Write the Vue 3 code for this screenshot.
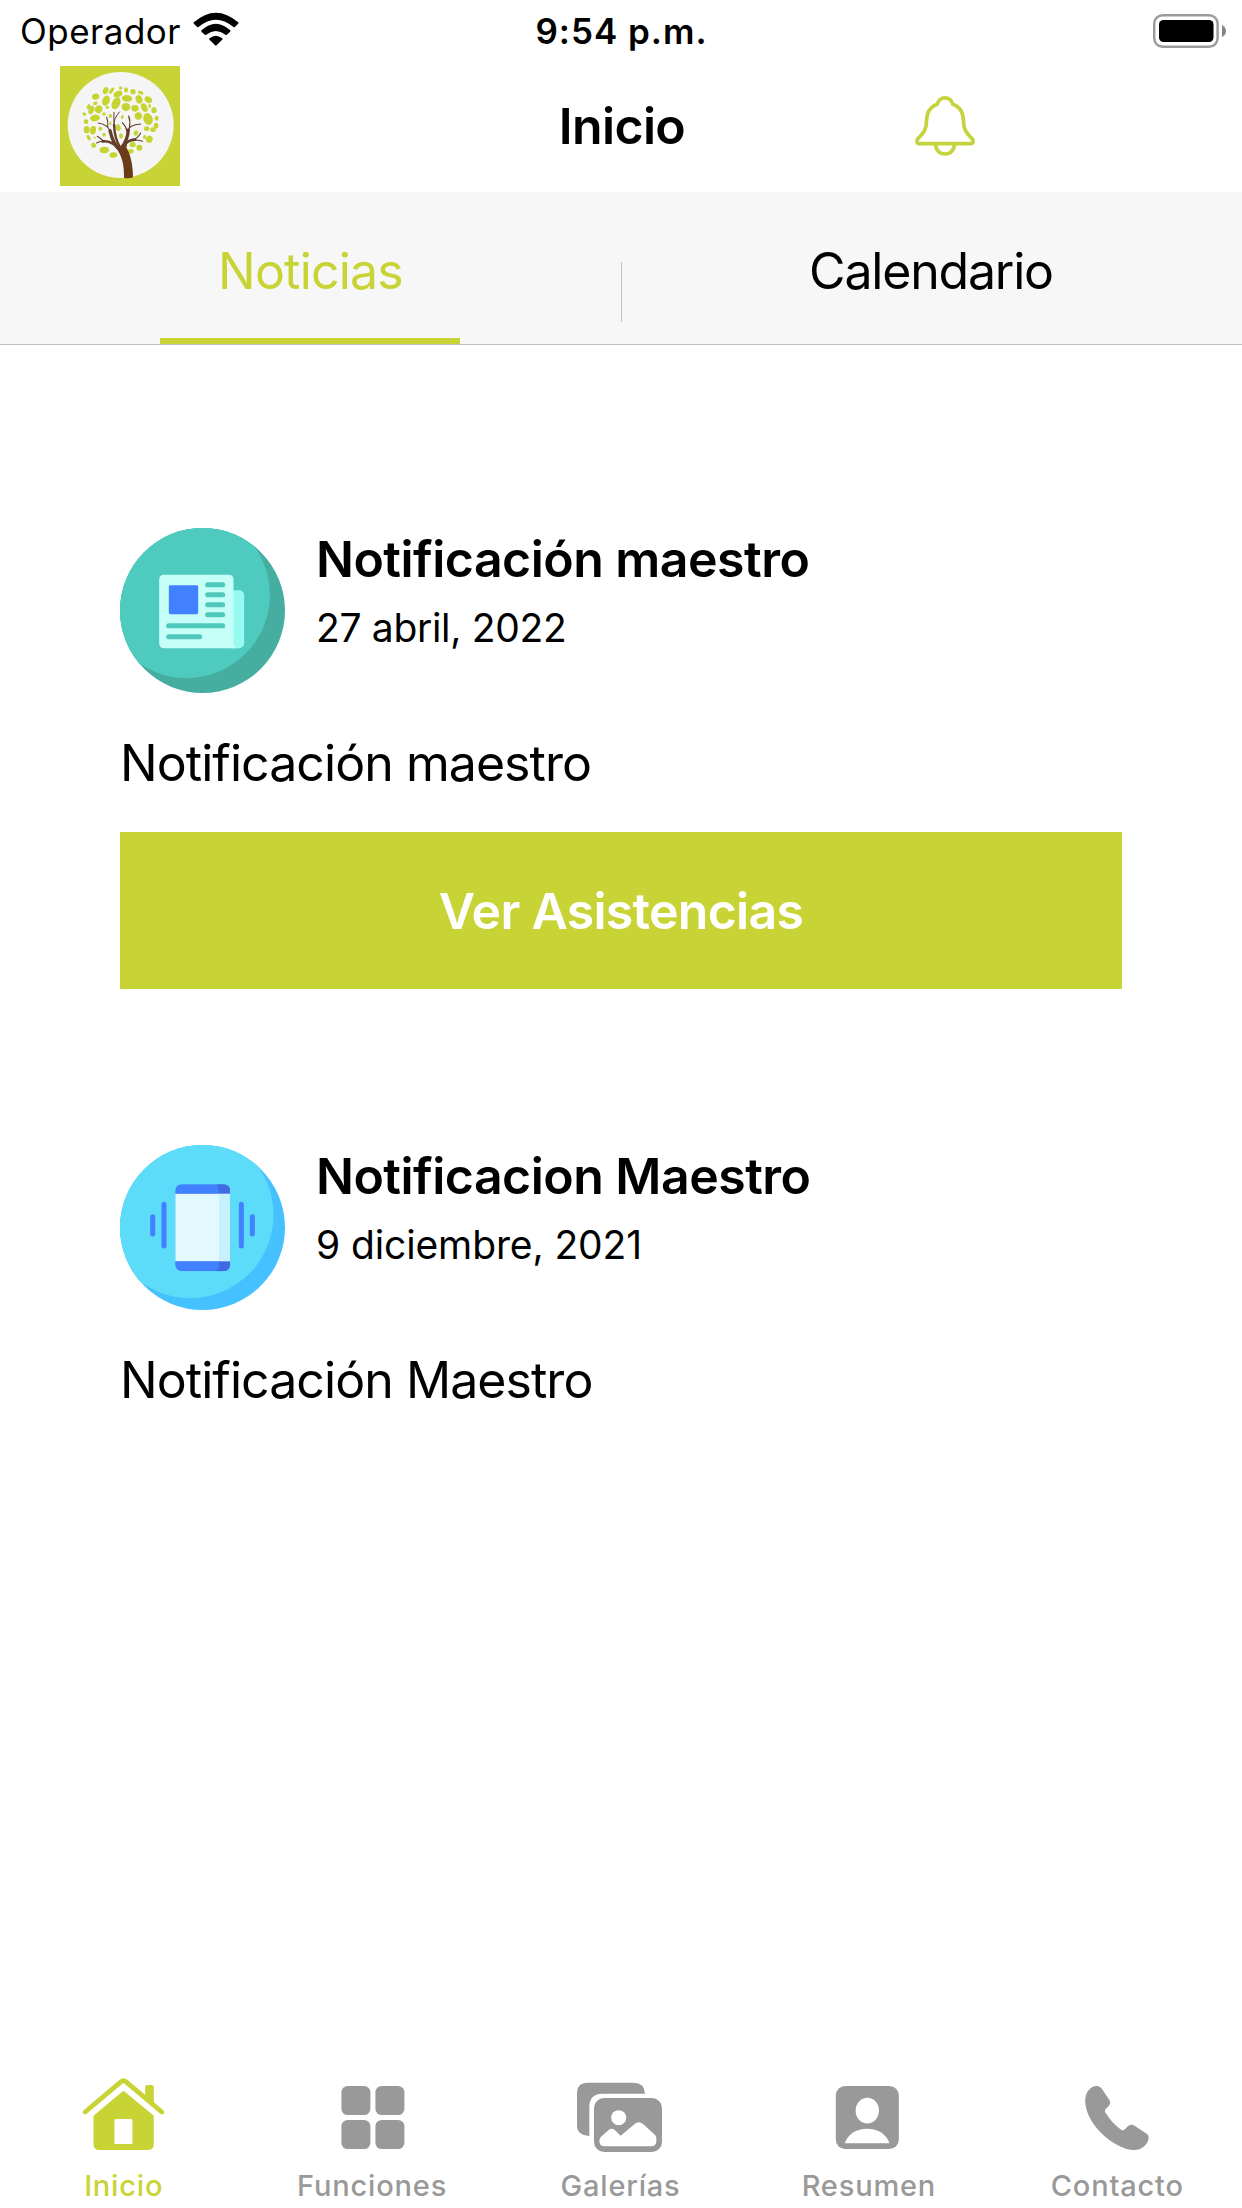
<script setup>
import { ref } from 'vue'

// Canopy leaves: [cx, cy, rx, ry, rotation]
const leaves = [
  [137, 110, 11, 9, -15], [167, 92, 8, 11, 25], [185, 92, 5, 11, 35], [212, 84, 5, 5, 0],
  [228, 90, 6, 8, 0], [249, 95, 8, 8, 0], [272, 98, 9, 5, 20], [204, 102, 14, 9, -25],
  [168, 122, 11, 16, 20], [198, 130, 12, 19, 25], [231, 115, 16, 10, 5], [267, 118, 10, 13, -20],
  [295, 119, 12, 9, 30], [116, 140, 5, 8, 25], [136, 130, 7, 5, -15], [124, 150, 8, 13, 25],
  [146, 148, 11, 12, 20], [172, 142, 5, 5, 0], [228, 141, 13, 12, 0], [255, 145, 11, 10, 0],
  [283, 143, 9, 14, -25], [312, 151, 8, 9, 0], [299, 138, 4, 6, 0], [103, 162, 6, 5, 20],
  [135, 174, 15, 10, -8], [162, 162, 5, 5, 0], [181, 168, 5, 6, 0], [265, 168, 11, 11, 0],
  [294, 177, 14, 18, -20], [320, 175, 6, 8, 0], [108, 185, 7, 7, 0], [110, 209, 9, 11, 0],
  [129, 211, 9, 13, 10], [151, 206, 6, 6, 0], [204, 203, 8, 10, -15], [217, 171, 4, 6, 20],
  [318, 197, 7, 9, 0], [290, 206, 8, 7, 0], [309, 209, 8, 7, 0], [258, 219, 7, 8, 20],
  [298, 238, 10, 11, 20], [284, 231, 5, 6, 0], [116, 233, 5, 9, -28], [134, 233, 3, 3, 0],
  [131, 256, 7, 8, -20], [162, 224, 5, 6, 0], [213, 228, 6, 8, 0], [248, 254, 9, 8, 0],
  [268, 263, 9, 9, 0], [242, 274, 9, 7, -15], [163, 270, 14, 10, 0], [190, 285, 12, 8, -5],
  [206, 253, 4, 5, 0], [181, 190, 3, 6, 20]
]

const posts = [
  { id: 1, icon: 'news', title: 'Notificación maestro', date: '27 abril, 2022', body: 'Notificación maestro', action: 'Ver Asistencias' },
  { id: 2, icon: 'phone', title: 'Notificacion Maestro', date: '9 diciembre, 2021', body: 'Notificación Maestro' }
]

const tabs = ['Noticias', 'Calendario']
const activeTab = ref('Noticias')

const nav = [
  { id: 'home', label: 'Inicio', box: '66.6 48 252 228' },
  { id: 'grid', label: 'Funciones', box: '811.8 48 252 228' },
  { id: 'gallery', label: 'Galerías', box: '117 48 252 228' },
  { id: 'profile', label: 'Resumen', box: '861.6 48 252 228' },
  { id: 'call', label: 'Contacto', box: '167.4 48 252 228' }
]
const activeNav = ref('home')
</script>

<template>
  <div class="screen">
    <div class="status">
      <div class="carrier">
        <span class="carrier-name">Operador</span>
        <svg class="wifi" viewBox="580 37 137 102">
          <path d="M582 68 Q648 10 715 68 Q717 70 715 72 L705 82 Q703 84 701 82 Q648 38 596 82 Q594 84 592 82 L582 72 Q580 70 582 68Z" />
          <path d="M605 92 Q648 53 691 92 Q693 94 691 96 L681 105 Q679 107 677 105 Q648 83 619 105 Q617 107 615 105 L605 96 Q603 94 605 92Z" />
          <path d="M629 116 Q648 100 667 116 Q669 118 667 120 L650 137 Q648 139 646 137 L629 120 Q627 118 629 116Z" />
        </svg>
      </div>
      <span class="time">9:54 p.m.</span>
      <div class="power">
        <svg class="battery" viewBox="0 0 73 34">
          <rect x="1.2" y="1.2" width="63.400" height="31.6" rx="8.5" fill="none" stroke="#9b9b9b" stroke-width="2.4" />
          <rect x="6" y="6" width="54.500" height="22" rx="4.5" fill="#000" />
          <path d="M69 11 Q73 13 73 17 T69 23Z" fill="#858585" />
        </svg>
      </div>
    </div>

    <header class="header">
      <svg class="logo" viewBox="30 18 360 360">
        <rect x="30" y="18" width="360" height="360" fill="#c8d435" />
        <circle cx="212" cy="195" r="159" fill="#f5f5f6" />
        <ellipse
          v-for="(l, i) in leaves"
          :key="i"
          :cx="l[0]" :cy="l[1]" :rx="l[2]" :ry="l[3]"
          :transform="`rotate(${l[4]} ${l[0]} ${l[1]})`"
          fill="#c5d431"
        />
        <path d="M222 353 C223 315 216 286 196 262 C190 254 193 247 200 254 Q211 266 222 254 C229 245 234 252 229 262 C243 286 249 320 249 352 Q235 357 222 353Z" fill="#6b3a17" />
        <g fill="none" stroke="#643d2a" stroke-linecap="round">
          <path d="M205 264 C188 250 184 226 180 212" stroke-width="10" />
          <path d="M180 214 C176 200 164 192 145 189 M173 200 Q175 184 170 172" stroke-width="3.4" />
          <path d="M202 262 C188 246 172 243 158 244" stroke-width="8" />
          <path d="M160 244 Q150 243 140 249 M160 243 Q148 232 142 229" stroke-width="3.4" />
          <path d="M210 262 C196 240 193 216 192 194" stroke-width="7" />
          <path d="M192 196 Q190 176 208 156 M192 188 Q191 170 192 157" stroke-width="3" />
          <path d="M214 264 C228 246 234 228 235 210" stroke-width="10" />
          <path d="M235 212 C236 200 246 194 272 192 M238 203 Q242 184 236 168 M232 217 Q229 200 217 188" stroke-width="3.4" />
          <path d="M219 262 C230 242 242 240 256 239" stroke-width="8" />
          <path d="M250 240 Q266 240 277 244 M250 239 Q266 232 272 219" stroke-width="3.4" />
        </g>
      </svg>
      <h1 class="title">Inicio</h1>
      <svg class="bell" viewBox="0 0 60 60" fill="none" stroke="#c5d33f" stroke-width="3.7" stroke-linejoin="round">
        <path d="M4 47.6 C1.6 47.6 1.4 45 2.8 42.8 C6.5 38.5 10.6 36 11.2 29 C11.8 22 11 12.500 22.2 8.2 C23.5 4 26 1.9 30 1.9 S36.5 4 37.8 8.2 C49 12.500 48.2 22 48.8 29 C49.4 36 53.5 38.5 57.2 42.8 C58.6 45 58.4 47.6 56 47.6Z" />
        <path d="M20.6 48 C20.6 54 24.5 58 30 58 S39.4 54 39.4 48" />
      </svg>
    </header>

    <div class="tabs">
      <button
        v-for="t in tabs"
        :key="t"
        class="tab"
        :class="{ active: t === activeTab, wide: t === 'Calendario' }"
        @click="activeTab = t"
      >
        {{ t }}
      </button>
      <span class="divider"></span>
    </div>

    <main class="feed">
      <article v-for="p in posts" :key="p.id" class="post">
        <div class="post-head">
          <svg v-if="p.icon === 'news'" class="badge" viewBox="29.5 53.5 495 495">
            <defs><clipPath id="newsDisc"><circle cx="277" cy="301" r="247.5" /></clipPath></defs>
            <g clip-path="url(#newsDisc)">
              <rect x="29" y="53" width="496" height="496" fill="#46aea0" />
              <circle cx="229" cy="254" r="250" fill="#4fcabf" />
              <path d="M29 53 H437 L437 113 L95 465 L29 465Z" fill="#4fcabf" />
            </g>
            <rect x="345" y="240" width="57" height="174" rx="15" fill="#97faf0" />
            <path d="M162 194 H355 Q370 194 370 209 V399 Q370 414 387 414 H162 Q147 414 147 399 V209 Q147 194 162 194Z" fill="#c6fff8" />
            <rect x="176" y="225" width="88" height="87" rx="4" fill="#4180ff" />
            <g fill="#50c7bb">
              <rect x="285" y="216" width="60" height="15" rx="7.5" />
              <rect x="285" y="246" width="60" height="15" rx="7.5" />
              <rect x="285" y="276" width="60" height="15" rx="7.5" />
              <rect x="285" y="306" width="60" height="15" rx="7.5" />
              <rect x="168" y="339" width="177" height="15" rx="7.5" />
              <rect x="168" y="372" width="108" height="15" rx="7.5" />
            </g>
          </svg>
          <svg v-else class="badge" viewBox="29.5 44.5 495 495">
            <defs>
              <clipPath id="phoneDisc"><circle cx="277" cy="292" r="247.5" /></clipPath>
              <clipPath id="phoneBody"><rect x="195" y="162" width="165" height="261" rx="20" /></clipPath>
            </defs>
            <g clip-path="url(#phoneDisc)">
              <rect x="29" y="44" width="496" height="496" fill="#45c1ff" />
              <circle cx="240" cy="254" r="250" fill="#5ddcfa" />
              <path d="M29 44 H447 L447 110 L100 460 L29 460Z" fill="#5ddcfa" />
            </g>
            <g clip-path="url(#phoneBody)">
              <rect x="195" y="162" width="165" height="261" fill="#4180ff" />
              <path d="M318 162 H360 V423 H318 Q327 415 327 393 V192 Q327 172 318 162Z" fill="#4169e0" />
              <rect x="195" y="191" width="165" height="202" fill="#e2f9ff" />
              <rect x="327" y="191" width="33" height="202" fill="#c7f1ff" />
            </g>
            <g fill="#4180ff">
              <rect x="120" y="252" width="15" height="67" rx="7.5" />
              <rect x="154" y="215" width="15" height="140" rx="7.5" />
              <rect x="386" y="215" width="15" height="140" rx="7.5" />
              <rect x="419" y="252" width="15" height="67" rx="7.5" />
            </g>
          </svg>
          <div class="meta">
            <h2 class="post-title">{{ p.title }}</h2>
            <span class="date" :class="p.icon">{{ p.date }}</span>
          </div>
        </div>
        <p class="body">{{ p.body }}</p>
        <button v-if="p.action" class="action">{{ p.action }}</button>
      </article>
    </main>

    <nav class="nav">
      <a
        v-for="n in nav"
        :key="n.id"
        class="nav-item"
        :class="{ active: n.id === activeNav }"
        @click="activeNav = n.id"
      >
        <svg class="nav-icon" :viewBox="n.box" fill="currentColor">
          <template v-if="n.id === 'home'">
            <path d="M256 112 V82 Q256 75 263 75 H275 Q282 75 282 82 V135Z" />
            <path d="M76 156 L184 65 Q191 59 198 65 L306 156" fill="none" stroke="currentColor" stroke-width="14.5" stroke-linecap="round" stroke-linejoin="round" />
            <path fill-rule="evenodd" d="M101 167 L186 96 Q191 91 196 96 L282 167 V251 Q282 270 263 270 H120 Q101 270 101 251Z M169 177 Q164 177 164 182 V252 H218 V182 Q218 177 213 177Z" />
          </template>
          <template v-else-if="n.id === 'grid'">
            <rect x="843" y="78" width="87" height="87" rx="19" />
            <rect x="945" y="78" width="87" height="87" rx="19" />
            <rect x="843" y="180" width="87" height="87" rx="19" />
            <rect x="945" y="180" width="87" height="87" rx="19" />
          </template>
          <template v-else-if="n.id === 'gallery'">
            <path d="M143 68 H282 Q312 68 315 101 H188 Q148 101 148 141 V228 Q111 226 111 196 V100 Q111 68 143 68Z" />
            <rect x="162" y="114" width="204" height="162" rx="30" />
            <circle cx="236" cy="173" r="22.5" fill="#fff" />
            <path d="M183 230 L206 210 Q215 203 224 210 L242 227 L284 192 Q296 181 309 192 L343 223 Q349 228 349 235 V243 Q349 259 333 259 H194 Q178 259 178 243 Q178 235 183 230Z" fill="#fff" />
          </template>
          <template v-else-if="n.id === 'profile'">
            <rect x="888" y="78" width="189" height="189" rx="28" />
            <ellipse cx="982.5" cy="152" rx="35" ry="38.5" fill="#fff" />
            <path d="M915 250 C924 222 949 206 982 206 S1040 222 1049 250Z" fill="#fff" />
          </template>
          <path
            v-else
            d="M229 78 C240 78 245 86 250 94 L268 121 C272 128 270 133 265 139 L256 148 C253 152 254 155 256 158 C268 178 285 196 303 209 C308 212 311 211 314 208 L323 199 C329 194 337 193 343 197 L376 219 C384 224 387 229 385 237 C382 255 364 270 342 270 C310 270 270 247 240 216 C212 187 195 152 195 122 C195 97 211 78 229 78Z"
          />
        </svg>
        <span class="nav-label">{{ n.label }}</span>
      </a>
    </nav>
  </div>
</template>

<style>
body {
  background: #fff;
}
</style>

<style scoped>
.screen {
  display: flex;
  flex-direction: column;
  width: 1242px;
  height: 2208px;
  background: #fff;
  color: #000;
  font-family: Inter, "Noto Sans", sans-serif;
}
.screen svg {
  display: block;
  flex: none;
}
h1, h2, p {
  margin: 0;
}
button {
  border: 0;
  padding: 0;
  background: none;
  font-family: inherit;
  color: inherit;
}

.status {
  display: grid;
  grid-template-columns: 1fr auto 1fr;
  align-items: center;
  height: 60px;
  padding: 0 16px 0 20px;
  font-size: 35px;
  line-height: 62px;
}
.carrier {
  display: flex;
  align-items: center;
  gap: 12px;
}
.carrier-name {
  letter-spacing: 0.5px;
}
.wifi {
  width: 46px;
  height: 34px;
  margin-top: -4px;
}
.time {
  font-weight: 600;
  letter-spacing: 0.97px;
  margin-left: -3px;
}
.power {
  display: flex;
  justify-content: flex-end;
}
.battery {
  width: 73px;
  height: 34px;
  margin-top: -1px;
}

.header {
  display: grid;
  grid-template-columns: repeat(3, 1fr);
  align-items: center;
  height: 132px;
}
.logo {
  width: 120px;
  height: 120px;
  margin-left: 60px;
}
.title {
  padding-left: 2px;
  font-size: 50px;
  font-weight: 600;
  line-height: 60px;
  letter-spacing: -0.65px;
  text-align: center;
}
.bell {
  width: 60px;
  height: 60px;
  margin-left: 87px;
}

.tabs {
  position: relative;
  display: flex;
  justify-content: space-around;
  height: 152px;
  padding-right: 2px;
  background: #f7f7f7;
  border-bottom: 1px solid #c0c0c0;
}
.tab {
  display: flex;
  justify-content: center;
  width: 300px;
  padding-top: 49px;
  border-bottom: 6px solid transparent;
  font-size: 50px;
  line-height: 60px;
  letter-spacing: -0.8px;
}
.tab.wide {
  padding-left: 2px;
  letter-spacing: -1.2px;
}
.tab.active {
  padding-left: 1px;
  color: #c8d435;
  border-bottom-color: #c8d435;
}
.divider {
  position: absolute;
  left: 621px;
  top: 70px;
  width: 1px;
  height: 60px;
  background: #c0c0c0;
}

.feed {
  flex: 1;
  padding: 183px 120px 0;
}
.post + .post {
  margin-top: 156px;
}
.post-head {
  display: flex;
  gap: 31px;
  height: 165px;
}
.badge {
  width: 165px;
  height: 165px;
}
.meta {
  display: flex;
  flex-direction: column;
  gap: 15px;
  padding-top: 1px;
}
.post-title {
  font-size: 50px;
  font-weight: 600;
  line-height: 60px;
  letter-spacing: -0.52px;
}
.date {
  font-size: 39px;
  line-height: 48px;
  letter-spacing: -0.12px;
}
.date.news {
  letter-spacing: -0.32px;
}
.body {
  margin-top: 40px;
  font-size: 50px;
  line-height: 60px;
  letter-spacing: -0.94px;
}
.action {
  display: block;
  width: 100%;
  height: 157px;
  margin-top: 39px;
  background: #c8d435;
  color: #fff;
  font-size: 50px;
  font-weight: 600;
  letter-spacing: -0.72px;
}

.nav {
  display: grid;
  grid-template-columns: repeat(5, 1fr);
  height: 132px;
}
.nav-item {
  display: flex;
  flex-direction: column;
  align-items: center;
  gap: 14px;
  color: #999;
}
.nav-item.active {
  color: #c8d435;
}
.nav-icon {
  width: 84px;
  height: 76px;
  overflow: visible;
}
.nav-label {
  margin-right: 1px;
  font-size: 29px;
  font-weight: 500;
  line-height: 40px;
  letter-spacing: 0.82px;
}
</style>
